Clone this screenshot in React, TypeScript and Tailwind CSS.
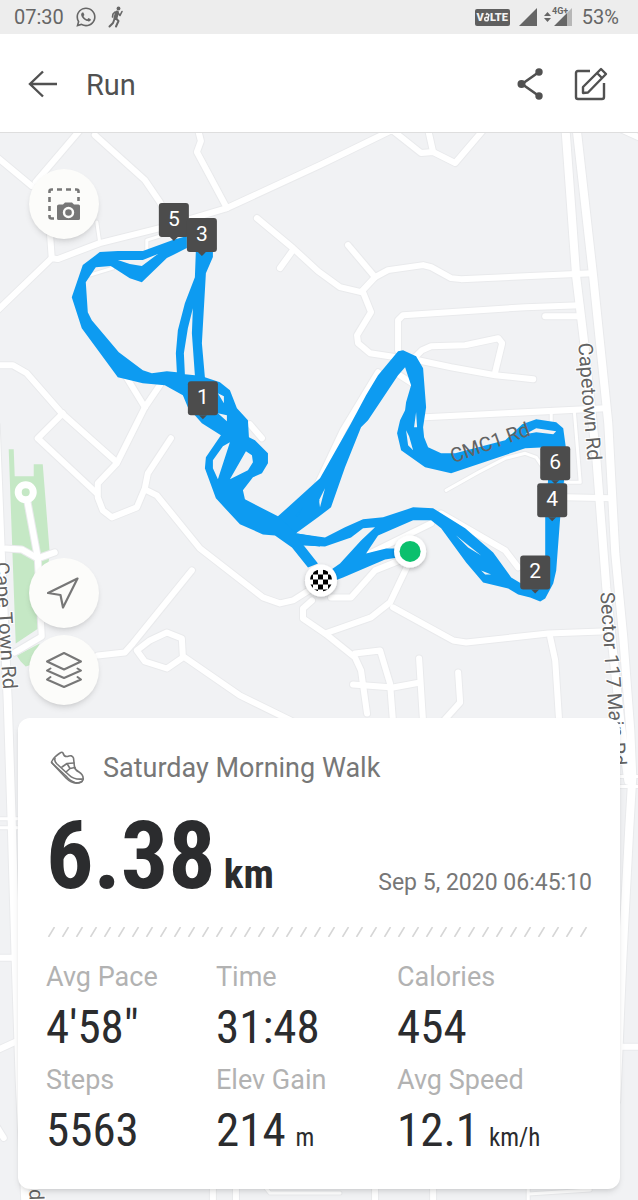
import { FaWhatsapp } from "react-icons/fa";

// Streets grouped by stroke width, in map units
const roads = [
  {
    width: 9,
    paths: [
      "M565 125L576 277L584 343L596 457L606 587L620 720L628 780",
      "M576 125L593 277L608 423L615 553L623 637L630 730L632 777L629 827L622 960L616 1100",
      "M-4 425L1 550L8 700L12 822L16 960L20 1080L26 1210",
    ],
  },
  {
    width: 7,
    paths: [
      "M82 128L36 182",
      "M-4 156L32 186",
      "M95 135L145 180L160 202L166 214",
      "M197 125L201 141L197 152L227 208",
      "M-4 312L52 258L58 259L100 243L160 228L227 208L320 165L351 150L392 130L421 153L433 152L455 163L484 129",
      "M50 230L52 258",
      "M427 125L433 152",
      "M618 128L640 138",
      "M257 218L293 248L318 271L340 287L361 292L375 277L388 270L423 265L431 267L451 278L461 279L592 273",
      "M293 250L280 268",
      "M348 245L375 277",
      "M363 292L371 312L357 335L358 343L370 353L396 357",
      "M398 350V320L403 315L525 307L580 305",
      "M545 316H580",
      "M415 357L422 350L431 346L465 345L498 338L502 343L495 372",
      "M418 360L451 367L495 375L533 379",
      "M425 417L605 408",
      "M-4 365H13L27 373L62 413L117 462",
      "M126 376L145 407",
      "M160 385L145 407L117 463L98 483V497L103 510L112 517L137 507L145 488L148 473L171 438",
      "M63 413L38 438L97 493",
      "M147 490L157 495L200 548L263 597L280 603L293 600L312 588",
      "M192 570L133 643L125 652L98 655",
      "M137 650L150 640L167 632L182 638L183 657L167 668L145 661L137 650",
      "M185 657L240 695L295 722",
      "M566 497L611 498",
      "M441 513L505 550L518 567",
      "M370 553L431 523",
      "M331 597H351L375 570L400 560",
      "M410 560L390 602L371 617L325 633L303 618V608L312 600",
      "M393 607L453 640L466 642L548 633L601 631",
      "M550 637L555 660L559 722",
      "M325 633L355 657L361 670L367 713",
      "M355 653L380 650L390 683L393 722",
      "M353 684L393 687L420 682",
      "M419 658L423 722",
      "M458 672L460 702L442 722",
      "M310 500L343 430L378 372",
      "M398 374L412 383",
      "M250 424L262 438",
      "M6 548L22 549L38 558L55 552",
      "M38 557L42 636L15 652",
      "M28 503L38 557",
      "M616 1046H642",
      "M-4 957H14",
      "M-4 1050L18 1040",
      "M-4 1124L4 1137",
      "M213 1180V1204",
      "M236 1180V1204",
      "M375 1180V1204",
      "M433 1180V1204",
    ],
  },
  {
    width: 4,
    paths: [
      "M97 222L100 243",
      "M147 250V240L160 236",
      "M90 275L113 268",
      "M551 410V425",
      "M574 410L580 482H566",
      "M446 490L478 472L505 458L525 453L536 457L542 466",
      "M-4 818H20M-4 827H20",
      "M618 776H642M618 786H642",
      "M265 1186L270 1192H340",
      "M528 1186V1204M528 1193L590 1189",
    ],
  },
];

const track = [
  // western loop
  "M187 236L173 240L143 251L118 251L100 252L83 265L72 297L82 328L118 377L143 383L165 385L183 395L188 407L202 423L221 435L206 457L205 468L216 498L240 524L263 534L275 535L292 547L308 567L318 563L303 544L320 546V537L296 533L320 500L278 516L245 499L243 490L253 477L262 473L268 463L268 453L255 440L249 437L248 420L237 408L230 390L220 382L205 377L202 343L206 273L213 257L213 250L196 250L195 277L185 303L178 330L176 353L177 372L167 371L152 373L143 370L119 352L92 320L88 312L86 282L96 267L111 266L130 278L142 282L167 258L187 248Z M118 260L130 264L142 266L158 254L143 260Z M193 308L188 328L184 353L185 374L195 375L192 333Z M218 393L224 403L224 396Z M218 413L227 421L227 415Z M230 442L223 446L213 460L213 468L218 479Z M246 451L230 479L248 470L253 462L252 455Z",
  // northern peak
  "M278 516L320 478L350 425L366 395L378 375L398 351L403 350L416 356L423 368L426 407L423 427L424 437L428 447L441 453L455 453L505 440L522 424L536 419L556 422L563 428L566 450L562 482H548L546 447L525 448L451 473L425 467L401 450L397 433L400 420L405 410L406 402L411 385L405 367L398 375L368 420L361 427L345 467L331 507L318 517L296 533Z M325 488L319 500L320 507Z M303 507L295 516L298 516Z M406 430L408 445L413 450L409 436Z M416 412L414 427L417 427Z M525 434L536 432L553 434L556 431L536 428Z",
  // southern leg
  "M295 533L325 537L345 527L363 519L383 517L413 507L433 508L465 528L493 552L511 577L521 583L540 580L545 560L545 517L548 478H564L560 517L556 570L553 583L545 598L540 601L530 597L518 594L508 588L483 582L466 562L441 528L431 520L413 520L378 535L366 553L386 548L404 548V556L385 559L343 577L330 582V570L340 563L361 540L375 527L363 528L351 537L325 546L303 545Z M456 535L468 547L481 555Z M481 570L485 574L491 574Z",
];

const pins = [
  { label: "5", x: 174, y: 237 },
  { label: "3", x: 202, y: 252 },
  { label: "1", x: 203, y: 415 },
  { label: "6", x: 555, y: 480 },
  { label: "4", x: 552, y: 517 },
  { label: "2", x: 535, y: 589 },
];

const streetNames = [
  { name: "Capetown Rd", transform: "translate(578 343) rotate(85.5)" },
  { name: "CMC1 Rd", transform: "translate(453 463) rotate(-20)" },
  { name: "Sector 117 Main Rd", transform: "translate(600 592) rotate(86)" },
  { name: "Cape Town Rd", transform: "translate(-5 562) rotate(86.2)" },
  { name: "Rd", transform: "translate(29 1176) rotate(88)" },
];

const stats = [
  { label: "Avg Pace", value: "4'58\"" },
  { label: "Time", value: "31:48" },
  { label: "Calories", value: "454" },
  { label: "Steps", value: "5563" },
  { label: "Elev Gain", value: "214", unit: "m" },
  { label: "Avg Speed", value: "12.1", unit: "km/h" },
];

const RouteMap = () => (
  <svg
    className="absolute inset-0 h-full w-full"
    viewBox="0 133 638 1067"
    preserveAspectRatio="xMidYMin slice"
    role="img"
    aria-label="Route map"
  >
    <defs>
      <clipPath id="flag">
        <circle cx="321" cy="580" r="11" />
      </clipPath>
      <filter id="lift" x="-30%" y="-30%" width="160%" height="160%">
        <feDropShadow dx="0" dy="2" stdDeviation="2" floodOpacity="0.25" />
      </filter>
    </defs>
    <rect y="133" width="638" height="1067" fill="#f1f2f4" />
    <path
      d="M9 449H14L15 476H34V464H43L50 553L40 627L16 643ZM17 655L40 643L32 664L26 666L21 661Z"
      fill="#c5e8c5"
    />
    <g fill="none" strokeLinejoin="round" strokeLinecap="round">
      {roads.map((group) =>
        group.paths.map((d) => (
          <path key={d} d={d} stroke="#e9eaec" strokeWidth={group.width + 1} />
        ))
      )}
      {roads.map((group) =>
        group.paths.map((d) => <path key={d} d={d} stroke="#fff" strokeWidth={group.width - 1} />)
      )}
      <circle cx="26" cy="492" r="7.5" fill="#c5e8c5" stroke="#fff" strokeWidth="7" />
    </g>
    <g fill="#0d9bf1" fillRule="evenodd">
      {track.map((d) => (
        <path key={d} d={d} />
      ))}
    </g>
    <g fill="#636363" fontSize="20">
      {streetNames.map((street) => (
        <text
          key={street.transform}
          transform={street.transform}
          stroke="#fff"
          strokeWidth={street.name === "CMC1 Rd" ? 0 : 2}
          paintOrder="stroke"
        >
          {street.name}
        </text>
      ))}
    </g>
    <g filter="url(#lift)">
      <circle cx="321" cy="580" r="16" fill="#fff" />
      <circle cx="410" cy="551" r="16" fill="#fff" />
    </g>
    <circle cx="410" cy="551" r="10.5" fill="#0bc06d" />
    <path
      clipPath="url(#flag)"
      d="M313 569h5v5h-5zM323 569h5v5h-5zM308 574h5v5h-5zM318 574h5v5h-5zM328 574h5v5h-5zM313 579h5v5h-5zM323 579h5v5h-5zM308 584h5v5h-5zM318 584h5v5h-5zM328 584h5v5h-5zM313 589h5v5h-5zM323 589h5v5h-5z"
      fill="#000"
    />
    {pins.map((pin) => (
      <g key={pin.label}>
        <rect x={pin.x - 15} y={pin.y - 34} width="30" height="34" rx="3" fill="#4c4c4c" />
        <path d={`M${pin.x - 4} ${pin.y}h8l-4 4z`} fill="#4c4c4c" />
        <text x={pin.x} y={pin.y - 11} fill="#fff" fontSize="21" textAnchor="middle">
          {pin.label}
        </text>
      </g>
    ))}
  </svg>
);

const StatusBar = () => (
  <div className="flex items-center justify-between bg-[#ededed] pr-[19px] pl-[14px] text-xl leading-[34px] text-[#666]">
    <div className="flex items-center gap-[11px]">
      <span>07:30</span>
      <FaWhatsapp size={22} />
      <svg width="16" height="22" viewBox="0 0 16 22" fill="none" stroke="currentColor" strokeLinecap="round" strokeLinejoin="round">
        <circle cx="10.500" cy="2.500" r="1.900" fill="currentColor" stroke="none" />
        <path d="M9 6.500L7.500 12" strokeWidth="4" />
        <path d="M7 6L5 8L4.500 11M10.500 7.500L12 9.500L14 5.500" strokeWidth="1.600" />
        <path d="M8 12.500L10.500 15L8 20.500M6.500 13L5 17L1.500 20.500" strokeWidth="2" />
      </svg>
    </div>
    <div className="flex items-center gap-[9px]">
      <span className="flex h-[17px] items-center rounded-xs bg-[#5f5f5f] px-[2px] text-[11px] leading-none font-black text-[#f2f2f2]">
        V
        <svg width="6" height="10" viewBox="0 0 6 10" fill="none" stroke="currentColor" strokeWidth="1.5">
          <circle cx="2.5" cy="7" r="1.8" />
          <path d="M4 6L5 3L3 1.5L2 3" />
        </svg>
        LTE
      </span>
      <svg width="54" height="22" viewBox="0 0 54 22" fill="currentColor">
        <path d="M0 20L18 2V20ZM25 10L28.500 6L32 10ZM25 12L28.500 16L32 12ZM35 20L48 7V20Z" />
        <path d="M48 7L53 2V20H48Z" opacity="0.4" />
        <text x="33" y="8" fontSize="9" fontWeight="700">
          4G+
        </text>
      </svg>
      <span>53%</span>
    </div>
  </div>
);

const Header = () => (
  <header className="flex h-[99px] items-center border-b border-[#dedede] bg-white px-7 pt-[2px] text-[#515151]">
    <button type="button" aria-label="Back">
      <svg width="30" height="28" viewBox="0 0 30 28" fill="none" stroke="currentColor" strokeWidth="2.4">
        <path d="M15 1.500L2 14L15 26.500M2 14H29" />
      </svg>
    </button>
    <h1 className="ml-7 flex-1 pt-1 text-[29px]">Run</h1>
    <button type="button" aria-label="Share">
      <svg width="28" height="34" viewBox="0 0 28 34" fill="currentColor">
        <path d="M23 5L6 17L23 29" fill="none" stroke="currentColor" strokeWidth="2.6" />
        <circle cx="5.500" cy="17" r="4" />
        <circle cx="23" cy="5" r="3.7" />
        <circle cx="23" cy="29" r="3.7" />
      </svg>
    </button>
    <button type="button" aria-label="Edit" className="ml-[30px]">
      <svg width="36" height="34" viewBox="0 0 36 34" fill="none" stroke="currentColor" strokeWidth="2.4" strokeLinejoin="round">
        <path d="M16 4H4Q2 4 2 6V30Q2 32 4 32H28Q30 32 30 30V16" />
        <path d="M9 26V20L27 2L32 7L14 25.500ZM23 6L28 11" />
      </svg>
    </button>
  </header>
);

const MapControls = () => (
  <div className="relative flex w-[70px] flex-1 flex-col gap-[7px] text-[#777]">
    <button type="button" aria-label="Snapshot" className="mb-auto flex size-[70px] items-center justify-center rounded-full bg-[#fcfcfa] shadow-md">
      <svg width="32" height="32" viewBox="0 0 32 32" fill="none" stroke="currentColor" strokeWidth="2.6">
        <path d="M1.500 5V3.500Q1.500 1.500 3.500 1.500H5M9 1.500H14M18 1.500H23M27 1.500H28.500Q30.500 1.500 30.500 3.500V5M30.500 9V13M1.500 9V14M1.500 18V23M1.500 27V28.500Q1.500 30.500 3.500 30.500H6" />
        <path d="M11 16.500H15L17 14.500H24L26 16.500H30.500Q32 16.500 32 18V30.500Q32 32 30.500 32H10.500Q9 32 9 30.500V18Q9 16.500 11 16.500Z" fill="currentColor" stroke="none" />
        <circle cx="20.500" cy="24.500" r="4.500" stroke="#fcfcfa" strokeWidth="2.4" />
      </svg>
    </button>
    <button type="button" aria-label="My location" className="flex size-[70px] items-center justify-center rounded-full bg-[#fcfcfa] shadow-md">
      <svg width="34" height="34" viewBox="0 0 34 34" fill="none" stroke="currentColor" strokeWidth="2.2" strokeLinejoin="round">
        <path d="M30.500 2.500L1 17L13.500 19L16 31.500Z" />
      </svg>
    </button>
    <button type="button" aria-label="Layers" className="flex size-[70px] items-center justify-center rounded-full bg-[#fcfcfa] shadow-md">
      <svg width="38" height="38" viewBox="0 0 38 38" fill="none" stroke="currentColor" strokeWidth="2" strokeLinejoin="round" strokeLinecap="round">
        <path d="M19 2L36 10.500L19 18.500L2 10.500Z" />
        <path d="M5.500 17.500L2 19.500L19 27L36 19.500L32.500 17.500" />
        <path d="M5.500 26L2 28.500L19 36L36 28.500L32.500 26" />
      </svg>
    </button>
  </div>
);

const SummaryCard = () => (
  <section className="relative mt-[13px] rounded-xl bg-white px-7 pt-7 pb-[17px] shadow-md">
    <div className="flex items-center gap-[18px] pl-1">
      <svg width="35" height="36" viewBox="0 0 35 36" fill="none" stroke="#777" strokeWidth="1.6" strokeLinejoin="round" strokeLinecap="round">
        <path d="M2 11Q4 7 10 3Q12 1.500 13 3Q14 7 17.500 6.500Q22 4.500 23.500 8L24.500 17Q25 20 29 22Q34 25 33 30Q31 34 25 32.500Q20 31 16 26L3 14Q1 12 2 11Z" />
        <path d="M5 8.500Q4 11 7 14L19 25Q24 30 33 29M1.500 12.500L16 28Q24 36 32 31.500" />
        <path d="M12 17L17 13.500L24 13M16 22L20 18.500L25 17.500M17 13.500L20 18.500" />
      </svg>
      <h2 className="text-[27px] leading-[44px] text-[#777]">Saturday Morning Walk</h2>
    </div>
    <div className="mt-2 flex items-end justify-between font-['Roboto_Condensed',Roboto,sans-serif]">
      <p className="flex items-baseline gap-2 text-[#2b2c2e]">
        <span className="text-[94px] leading-[116px] font-bold">6.38</span>
        <span className="text-[41px] leading-none font-bold">km</span>
      </p>
      <time dateTime="2020-09-05T06:45:10" className="pb-[15px] font-[Roboto,sans-serif] text-[23px] leading-8 text-[#777]">
        Sep 5, 2020 06:45:10
      </time>
    </div>
    <svg className="mt-[13px] block h-[10px] w-full" aria-hidden="true">
      <defs>
        <pattern id="hatch" width="14" height="10" patternUnits="userSpaceOnUse">
          <path d="M2.500 10L8.500 0" stroke="#d6d6d6" strokeWidth="1.6" />
        </pattern>
      </defs>
      <rect width="100%" height="10" fill="url(#hatch)" />
    </svg>
    <dl className="mt-6 grid grid-cols-[170fr_181fr_195fr] gap-y-[3px]">
      {stats.map((stat) => (
        <div key={stat.label}>
          <dt className="text-[27px] leading-8 text-[#b2b2b2]">{stat.label}</dt>
          <dd className="flex items-baseline gap-[10px] font-['Roboto_Condensed',Roboto,sans-serif] leading-[68px] text-[#2b2c2e]">
            <span className="text-[47px]">{stat.value}</span>
            {stat.unit && <span className="text-[25px]">{stat.unit}</span>}
          </dd>
        </div>
      ))}
    </dl>
  </section>
);

const App = () => (
  <div className="flex min-h-screen flex-col font-[Roboto,sans-serif]">
    <StatusBar />
    <Header />
    <main className="relative flex flex-1 flex-col overflow-hidden px-[18px] pt-9 pb-3">
      <RouteMap />
      <div className="flex min-h-[536px] flex-1 flex-col pl-[11px]">
        <MapControls />
      </div>
      <SummaryCard />
    </main>
  </div>
);

export default App;
